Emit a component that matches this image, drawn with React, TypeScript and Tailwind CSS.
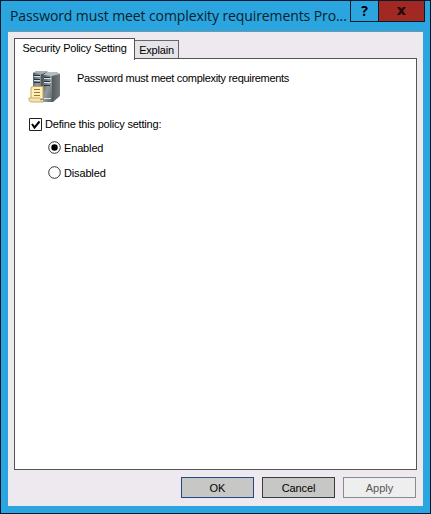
import type { ReactNode } from "react";

function ServerIcon() {
  return (
    <svg width="34" height="34" viewBox="0 0 34 34" className="block" aria-hidden="true">
      <defs>
        <linearGradient id="face" x1="0" y1="0" x2="1" y2="1">
          <stop offset="0" stopColor="#465057" />
          <stop offset=".5" stopColor="#929a9f" />
          <stop offset="1" stopColor="#5a6468" />
        </linearGradient>
        <linearGradient id="side" x1="0" y1="0" x2="1" y2="0">
          <stop offset="0" stopColor="#2c3336" />
          <stop offset="1" stopColor="#747b7d" />
        </linearGradient>
      </defs>
      <path d="M5 3 9 1h9l4 2v24l-6 3H5z" fill="url(#side)" />
      <path d="M5 3h8v25H5z" fill="url(#face)" />
      <path d="M5 3 9 1h9l3 2-7 1z" fill="#a6b0b4" />
      <path d="M6 6.5h6M6 10.5h6" stroke="#d5dee1" />
      <path d="M6 5.5h6M6 9.5h6M6 12.5h6" stroke="#26343c" />
      <path d="M15 4 19 2h9l4 2v22l-7 6H15z" fill="url(#side)" />
      <path d="M15 5h9v27h-9z" fill="url(#face)" />
      <path d="M15 5 19 2h9l4 2-8 2z" fill="#b4bec1" />
      <path d="M16 8.5h7M16 12.5h7M16 28.5h7" stroke="#dae3e5" />
      <path d="M16 7.5h6M16 11.5h6M16 15.5h6" stroke="#25323a" />
      <path d="M3 17.5q1-1 3-1h9V29H3z" fill="#fff0ba" stroke="#c9a253" />
      <path d="M1 28h11q1 4 3 4H3q-3-1-2-4z" fill="#f9e2a4" stroke="#c9ad73" />
      <path d="M6 19.5h6M6 22.5h6M6 25.5h6" stroke="#98783a" />
    </svg>
  );
}

function Radio({ checked, children }: { checked?: boolean; children: ReactNode }) {
  return (
    <label className="flex h-[25px] items-center">
      <svg width="13" height="13" viewBox="0 0 13 13" aria-hidden="true">
        <circle cx="6.5" cy="6.5" r="5.8" fill="white" stroke="#333" strokeWidth="1" />
        {checked && <circle cx="6.5" cy="6.5" r="3.2" fill="black" />}
      </svg>
      <span className="ml-[3px] tracking-[-0.15px]">{children}</span>
    </label>
  );
}

export default function App() {
  return (
    <div className="flex h-[514px] w-[431px] flex-col border border-[#07192a] bg-[#2ba5df] px-[7px] pb-[7px] font-['Liberation_Sans',Arial,sans-serif] text-[11px] leading-[14px] text-black">
      <header className="flex h-[30px] shrink-0 items-start justify-between">
        <h1 className="ml-[2px] mt-[4px] whitespace-nowrap font-['Open_Sans','Noto_Sans',sans-serif] text-[14px] leading-[22px] tracking-[-0.1px] text-[#071f2d]">
          Password must meet complexity requirements Pro...
        </h1>
        <div className="-mr-[2px] -mt-px flex h-[22px] w-[75px] shrink-0 border border-[#071c29] font-['Open_Sans',sans-serif] font-bold">
          <button className="w-[28px] border-r border-[#071c29] text-[14px] leading-[20px]">?</button>
          <button className="flex flex-1 items-center justify-center bg-[#a12823]" aria-label="Close">
            <svg width="9" height="8" viewBox="0 0 9 8"><path d="M0 0h3l1.5 2L6 0h3L6 4l3 4H6L4.5 6 3 8H0l3-4z" fill="#240b0b" /></svg>
          </button>
        </div>
      </header>
      <main className="flex min-h-0 flex-1 flex-col border-t border-[#7596a5] bg-[#eee9ef] px-[6px] pt-[6px]">
        <div className="flex h-[20px] shrink-0 items-end">
          <button className="z-10 -mb-[2px] h-[22px] w-[121px] whitespace-nowrap border border-b-0 border-[#555] bg-white pb-[3px] tracking-[-0.23px]">Security Policy Setting</button>
          <button className="h-[18px] w-[44px] border border-b-0 border-l-0 border-[#666] bg-[#e6e4e8] pt-px tracking-[-0.2px]">Explain</button>
        </div>
        <section className="h-[412px] shrink-0 border border-[#555] bg-white">
          <div className="ml-[13px] mt-[11px] flex h-[36px] items-start">
            <ServerIcon />
            <p className="ml-[15px] mt-[1px] whitespace-nowrap tracking-[-0.31px]">Password must meet complexity requirements</p>
          </div>
          <label className="ml-[14px] mt-[11px] flex h-[14px] items-center">
            <svg width="13" height="13" viewBox="0 0 13 13" aria-hidden="true">
              <path d="M.5.5h12v12H.5z" fill="white" stroke="#222" />
              <path d="m3 6 2.5 3.5L10.5 3.5" fill="none" stroke="black" strokeWidth="2" />
            </svg>
            <span className="ml-[3px] tracking-[-0.2px]">Define this policy setting:</span>
          </label>
          <div className="ml-[33px] mt-[4px]">
            <Radio checked>Enabled</Radio>
            <Radio>Disabled</Radio>
          </div>
        </section>
        <footer className="mt-[7px] flex justify-end gap-[8px] pr-px">
          <button className="h-[21px] w-[73px] border border-[#1f4a86] bg-[#c7c8c5]">OK</button>
          <button className="h-[21px] w-[73px] border border-[#3b3b3b] bg-[#c7c8c5] tracking-[-0.1px]">Cancel</button>
          <button className="h-[21px] w-[73px] border border-[#858b94] bg-[#efeeef] text-[#555]">Apply</button>
        </footer>
      </main>
    </div>
  );
}
